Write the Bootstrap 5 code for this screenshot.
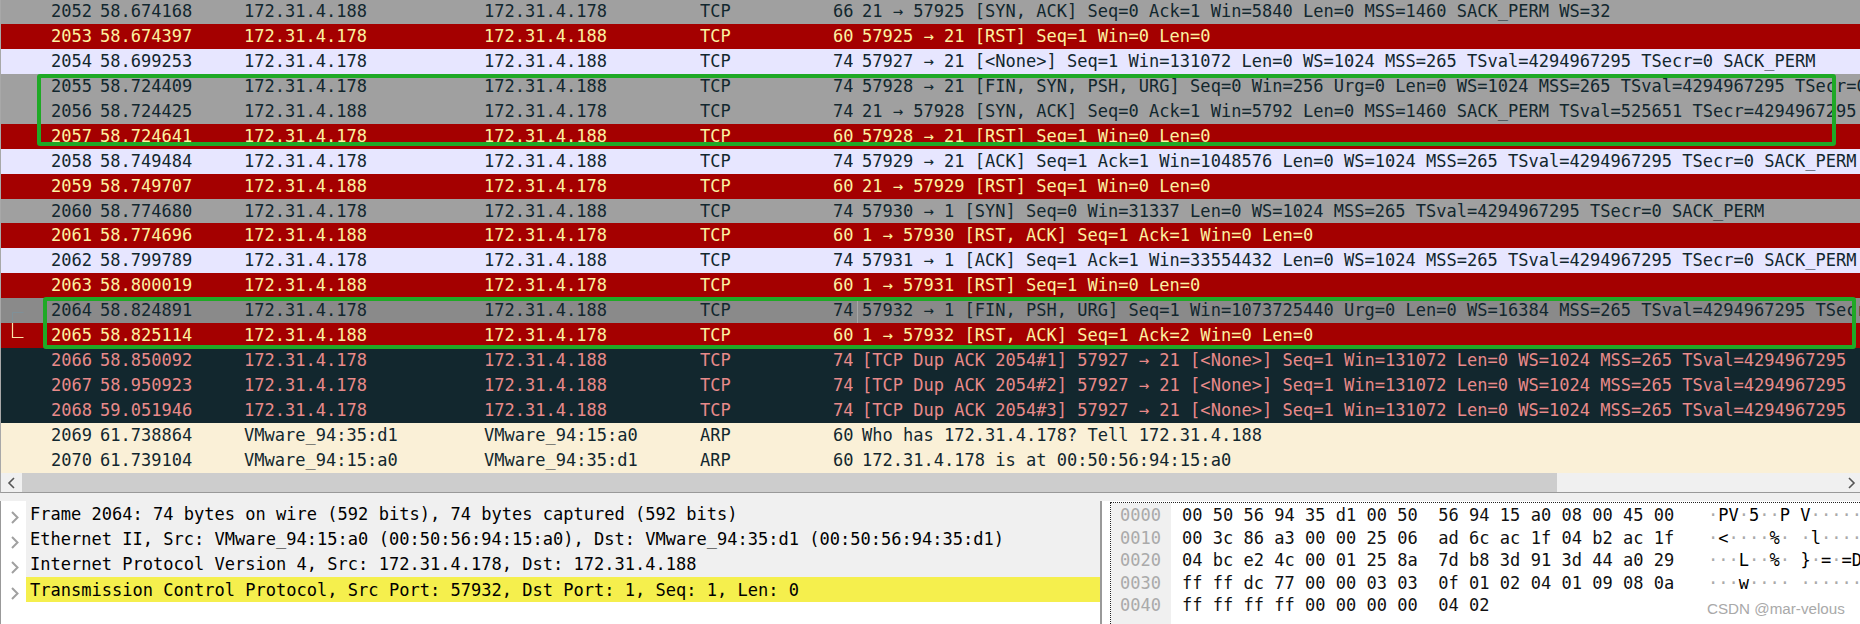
<!DOCTYPE html>
<html lang="en">
<head>
    <meta charset="UTF-8">
    <title>Wireshark capture</title>
    <link href="https://cdn.jsdelivr.net/npm/bootstrap@5.3.0/dist/css/bootstrap.min.css" rel="stylesheet">
    <style>
        html, body { height: 100%; overflow: hidden; background: #fff; }
        #shot { width: 1860px; height: 624px; font-family: "DejaVu Sans Mono", "Liberation Mono", monospace; font-size: 17.05px; color: #000; }

        /* packet list */
        #packetList { height: 474px; margin-top: -1px; border-left: 1px solid #a8a8a8; }
        .pkt { height: 24.94px; line-height: 24px; white-space: pre; }
        .pkt > span { flex: none; overflow: hidden; }
        .c-no { width: 91px; text-align: right; }
        .c-time { width: 144px; margin-left: 8px; }
        .c-src { width: 240px; }
        .c-dst { width: 216px; }
        .c-proto { width: 133px; }
        .c-len { width: 20px; text-align: right; }
        .c-info { flex: 1 1 0 !important; margin-left: 4px; padding-left: 4px; border-left: 1px solid transparent; }

        .syn { background: #a0a0a0; color: #12272e; }
        .rst { background: #a40000; color: #fdf2a0; }
        .tcp { background: #e7e6ff; color: #12272e; }
        .cur { background: #8a8a8a; color: #12272e; }
        .cur .c-info { border-left-color: #a6a6a6; }
        .bad { background: #12272e; color: #e88a8a; }
        .arp { background: #faf0d7; color: #12272e; }

        /* horizontal scrollbar */
        #hScroll { height: 20px; background: #f0f0f0; border-left: 1px solid #a8a8a8; border-bottom: 1px solid #999; }
        .scr-btn { width: 21px; }
        .scr-thumb { width: 1535px; background: #cdcdcd; }
        #splitGap { height: 8px; background: #f0f0f0; }

        /* details + bytes */
        #detailPane { width: 1102px; border-left: 1px solid #999; border-right: 2px solid #999; }
        .det-row { height: 25.2px; line-height: 27px; white-space: pre; }
        .det-arrow { width: 25px; }
        .det-text { padding-left: 4px; background: #f0f0f0; }
        .det-text.picked { background: #f5ef4d; }
        #bytePane { margin-left: 8px; margin-top: 1px; border-left: 1px dotted #222; border-top: 1px dotted #222; }
        .off-col { width: 60px; background: #f0f0f0; color: #aaa; padding-left: 9px; }
        .hex-col { padding-left: 11px; width: 537px; color: #111; }
        .hex-line { height: 22.5px; line-height: 25px; white-space: pre; }
        .nd { color: #aaa; }

        /* things lying over the list */
        .mark-box { position: absolute; border: 4px solid #1fa926; border-radius: 3px; pointer-events: none; }
        #box1 { left: 37px; top: 74px; width: 1799px; height: 72px; }
        #box2 { left: 43px; top: 297px; width: 1813px; height: 52px; }
        #relLine { position: absolute; left: 10px; top: 310px; }
        #stamp { position: absolute; left: 1707px; top: 598px; font-family: "Liberation Sans", sans-serif; font-size: 15.2px; line-height: 22px; color: #a9a9a9; white-space: pre; }
    </style>
</head>
<body>
    <div id="shot" class="position-relative overflow-hidden d-flex flex-column">
        <div id="packetList" class="overflow-hidden"></div>

        <div id="hScroll" class="d-flex">
            <div class="scr-btn d-flex align-items-center justify-content-center">
                <svg width="9" height="12" viewBox="0 0 9 12"><path d="M7 1 2 6l5 5" fill="none" stroke="#555" stroke-width="1.6"/></svg>
            </div>
            <div class="scr-thumb"></div>
            <div class="flex-grow-1 d-flex align-items-center justify-content-end pe-1">
                <svg width="9" height="12" viewBox="0 0 9 12"><path d="M2 1l5 5-5 5" fill="none" stroke="#555" stroke-width="1.6"/></svg>
            </div>
        </div>
        <div id="splitGap"></div>

        <div class="d-flex flex-grow-1 overflow-hidden">
            <div id="detailPane" class="flex-shrink-0 overflow-hidden"></div>
            <div id="bytePane" class="d-flex flex-grow-1 overflow-hidden">
                <div class="off-col flex-shrink-0" id="offCol"></div>
                <div class="hex-col flex-shrink-0" id="hexCol"></div>
                <div class="flex-grow-1" id="asciiCol"></div>
            </div>
        </div>

        <div id="box1" class="mark-box"></div>
        <div id="box2" class="mark-box"></div>
        <svg id="relLine" width="16" height="30" viewBox="0 0 16 30">
            <path d="M13.5 2.5H2.5V13" fill="none" stroke="#7f9098" stroke-width="1"/>
            <path d="M2.5 13V27.5H13.5" fill="none" stroke="#fbe3a8" stroke-width="1.2"/>
        </svg>
        <div id="stamp">CSDN @mar-velous</div>
    </div>

    <script src="https://cdn.jsdelivr.net/npm/bootstrap@5.3.0/dist/js/bootstrap.bundle.min.js"></script>
    <script>
        const A = "172.31.4.178", B = "172.31.4.188";
        const M1 = "VMware_94:35:d1", M2 = "VMware_94:15:a0";
        const OPT = "WS=1024 MSS=265 TSval=4294967295 TSecr=0 SACK_PERM";

        // no, time, src, dst, proto, len, info, colour class
        const packets = [
            [2052, "58.674168", B, A, "TCP", 66, "21 → 57925 [SYN, ACK] Seq=0 Ack=1 Win=5840 Len=0 MSS=1460 SACK_PERM WS=32", "syn"],
            [2053, "58.674397", A, B, "TCP", 60, "57925 → 21 [RST] Seq=1 Win=0 Len=0", "rst"],
            [2054, "58.699253", A, B, "TCP", 74, "57927 → 21 [<None>] Seq=1 Win=131072 Len=0 " + OPT, "tcp"],
            [2055, "58.724409", A, B, "TCP", 74, "57928 → 21 [FIN, SYN, PSH, URG] Seq=0 Win=256 Urg=0 Len=0 " + OPT, "syn"],
            [2056, "58.724425", B, A, "TCP", 74, "21 → 57928 [SYN, ACK] Seq=0 Ack=1 Win=5792 Len=0 MSS=1460 SACK_PERM TSval=525651 TSecr=4294967295", "syn"],
            [2057, "58.724641", A, B, "TCP", 60, "57928 → 21 [RST] Seq=1 Win=0 Len=0", "rst"],
            [2058, "58.749484", A, B, "TCP", 74, "57929 → 21 [ACK] Seq=1 Ack=1 Win=1048576 Len=0 " + OPT, "tcp"],
            [2059, "58.749707", B, A, "TCP", 60, "21 → 57929 [RST] Seq=1 Win=0 Len=0", "rst"],
            [2060, "58.774680", A, B, "TCP", 74, "57930 → 1 [SYN] Seq=0 Win=31337 Len=0 " + OPT, "syn"],
            [2061, "58.774696", B, A, "TCP", 60, "1 → 57930 [RST, ACK] Seq=1 Ack=1 Win=0 Len=0", "rst"],
            [2062, "58.799789", A, B, "TCP", 74, "57931 → 1 [ACK] Seq=1 Ack=1 Win=33554432 Len=0 " + OPT, "tcp"],
            [2063, "58.800019", B, A, "TCP", 60, "1 → 57931 [RST] Seq=1 Win=0 Len=0", "rst"],
            [2064, "58.824891", A, B, "TCP", 74, "57932 → 1 [FIN, PSH, URG] Seq=1 Win=1073725440 Urg=0 Len=0 WS=16384 MSS=265 TSval=4294967295 TSecr=0", "cur"],
            [2065, "58.825114", B, A, "TCP", 60, "1 → 57932 [RST, ACK] Seq=1 Ack=2 Win=0 Len=0", "rst"],
            [2066, "58.850092", A, B, "TCP", 74, "[TCP Dup ACK 2054#1] 57927 → 21 [<None>] Seq=1 Win=131072 Len=0 WS=1024 MSS=265 TSval=4294967295", "bad"],
            [2067, "58.950923", A, B, "TCP", 74, "[TCP Dup ACK 2054#2] 57927 → 21 [<None>] Seq=1 Win=131072 Len=0 WS=1024 MSS=265 TSval=4294967295", "bad"],
            [2068, "59.051946", A, B, "TCP", 74, "[TCP Dup ACK 2054#3] 57927 → 21 [<None>] Seq=1 Win=131072 Len=0 WS=1024 MSS=265 TSval=4294967295", "bad"],
            [2069, "61.738864", M1, M2, "ARP", 60, "Who has 172.31.4.178? Tell 172.31.4.188", "arp"],
            [2070, "61.739104", M2, M1, "ARP", 60, "172.31.4.178 is at 00:50:56:94:15:a0", "arp"]
        ];

        const details = [
            "Frame 2064: 74 bytes on wire (592 bits), 74 bytes captured (592 bits)",
            "Ethernet II, Src: VMware_94:15:a0 (00:50:56:94:15:a0), Dst: VMware_94:35:d1 (00:50:56:94:35:d1)",
            "Internet Protocol Version 4, Src: 172.31.4.178, Dst: 172.31.4.188",
            "Transmission Control Protocol, Src Port: 57932, Dst Port: 1, Seq: 1, Len: 0"
        ];

        const hexRows = [
            ["0000", "00 50 56 94 35 d1 00 50  56 94 15 a0 08 00 45 00", "·PV·5··P V······E·"],
            ["0010", "00 3c 86 a3 00 00 25 06  ad 6c ac 1f 04 b2 ac 1f", "·<····%· ·l······"],
            ["0020", "04 bc e2 4c 00 01 25 8a  7d b8 3d 91 3d 44 a0 29", "···L··%· }·=·=D·)"],
            ["0030", "ff ff dc 77 00 00 03 03  0f 01 02 04 01 09 08 0a", "···w···· ········"],
            ["0040", "ff ff ff ff 00 00 00 00  04 02", ""]
        ];

        function esc(s) {
            return s.replace(/&/g, "&amp;").replace(/</g, "&lt;").replace(/>/g, "&gt;");
        }

        document.getElementById("packetList").innerHTML = packets.map(p => `
            <div class="pkt d-flex ${p[7]}">
                <span class="c-no">${p[0]}</span>
                <span class="c-time">${p[1]}</span>
                <span class="c-src">${p[2]}</span>
                <span class="c-dst">${p[3]}</span>
                <span class="c-proto">${p[4]}</span>
                <span class="c-len">${p[5]}</span>
                <span class="c-info">${esc(p[6])}</span>
            </div>`).join("");

        const arrow = `<svg width="25" height="24" viewBox="0 0 25 24"><path d="M11 9l5.5 5.5L11 20" fill="none" stroke="#a0a0a0" stroke-width="2"/></svg>`;
        document.getElementById("detailPane").innerHTML = details.map((t, i) => `
            <div class="det-row d-flex">
                <div class="det-arrow flex-shrink-0">${arrow}</div>
                <div class="det-text flex-grow-1 ${i == 3 ? "picked" : ""}">${t}</div>
            </div>`).join("");

        document.getElementById("offCol").innerHTML = hexRows.map(r => `<div class="hex-line">${r[0]}</div>`).join("");
        document.getElementById("hexCol").innerHTML = hexRows.map(r => `<div class="hex-line">${r[1]}</div>`).join("");
        document.getElementById("asciiCol").innerHTML = hexRows.map(r =>
            `<div class="hex-line">${esc(r[2]).replace(/·/g, '<span class="nd">·</span>')}</div>`).join("");
    </script>
</body>
</html>
